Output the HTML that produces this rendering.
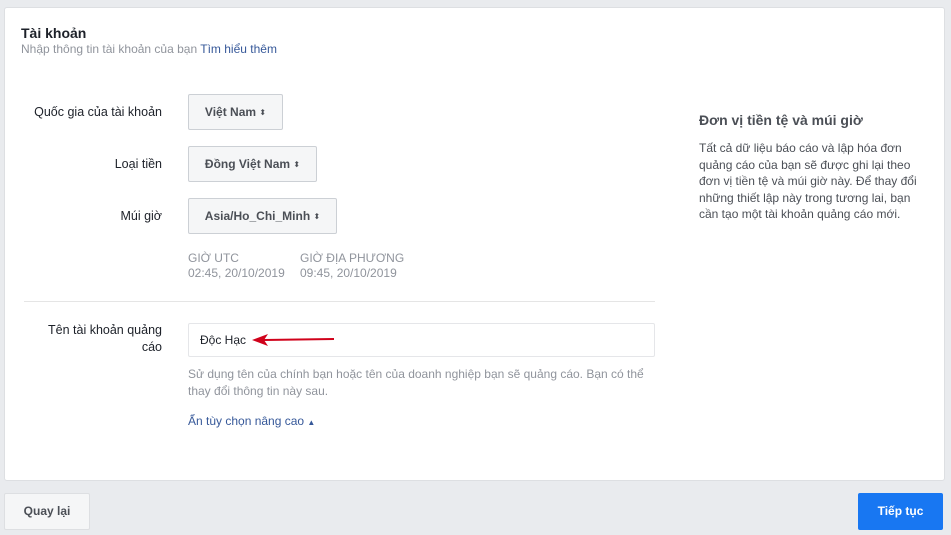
<!DOCTYPE html>
<html><head><meta charset="utf-8"><style>
*{margin:0;padding:0;box-sizing:border-box}
body{width:951px;height:535px;background:#e9ebee;font-family:"Liberation Sans",sans-serif;position:relative;overflow:hidden;color:#1d2129}
.card{position:absolute;left:4px;top:7px;width:941px;height:474px;background:#fff;border:1px solid #dddfe2;border-radius:3px}
.a{position:absolute;white-space:nowrap}
.sel{position:absolute;height:36px;background:#f5f6f7;border:1px solid #ccd0d5;border-radius:2px;font-size:12px;font-weight:bold;color:#4b4f56;line-height:34px;text-align:center}
.sel i{font-style:normal;font-size:8px;font-weight:normal;vertical-align:1px}
.g{color:#90949c;font-size:12px}
.l{font-size:12.5px;text-align:right;left:0;width:162px}
</style></head><body>
<div class="card"></div>
<div class="a" style="left:21px;top:25px;font-size:14px;font-weight:bold">Tài khoản</div>
<div class="a" style="left:21px;top:42px;font-size:12px;color:#90949c">Nhập thông tin tài khoản của bạn <span style="color:#365899">Tìm hiểu thêm</span></div>

<div class="a l" style="top:105px">Quốc gia của tài khoản</div>
<div class="sel" style="left:188px;top:94px;width:95px">Việt Nam <i>⬍</i></div>
<div class="a l" style="top:157px">Loại tiền</div>
<div class="sel" style="left:188px;top:146px;width:129px">Đồng Việt Nam <i>⬍</i></div>
<div class="a l" style="top:209px">Múi giờ</div>
<div class="sel" style="left:188px;top:198px;width:149px">Asia/Ho_Chi_Minh <i>⬍</i></div>
<div class="a g" style="left:188px;top:251px;line-height:15px">GIỜ UTC<br>02:45, 20/10/2019</div>
<div class="a g" style="left:300px;top:251px;line-height:15px">GIỜ ĐỊA PHƯƠNG<br>09:45, 20/10/2019</div>

<div style="position:absolute;left:24px;top:301px;width:631px;height:1px;background:#e5e5e5"></div>

<div class="a l" style="top:322px;line-height:17px">Tên tài khoản quảng<br>cáo</div>
<div style="position:absolute;left:188px;top:323px;width:467px;height:34px;border:1px solid #e5e6e9;border-radius:2px"></div>
<div class="a" style="left:200px;top:333px;font-size:12px">Độc Hạc</div>
<svg style="position:absolute;left:250px;top:332px" width="86" height="16"><line x1="14" y1="8" x2="84" y2="7" stroke="#d0021b" stroke-width="2"/><path d="M2 8 L18 2 L14 8 L18 14 Z" fill="#d0021b"/></svg>
<div class="a g" style="left:188px;top:366px;line-height:17px">Sử dụng tên của chính bạn hoặc tên của doanh nghiệp bạn sẽ quảng cáo. Bạn có thể<br>thay đổi thông tin này sau.</div>
<div class="a" style="left:188px;top:414px;font-size:12px;color:#365899">Ẩn tùy chọn nâng cao <span style="font-size:8px">▲</span></div>

<div class="a" style="left:699px;top:112px;font-size:14px;font-weight:bold;color:#4b4f56">Đơn vị tiền tệ và múi giờ</div>
<div class="a" style="left:699px;top:140px;font-size:12px;color:#4b4f56;line-height:16.5px">Tất cả dữ liệu báo cáo và lập hóa đơn<br>quảng cáo của bạn sẽ được ghi lại theo<br>đơn vị tiền tệ và múi giờ này. Để thay đổi<br>những thiết lập này trong tương lai, bạn<br>cần tạo một tài khoản quảng cáo mới.</div>

<div style="position:absolute;left:4px;top:493px;width:86px;height:37px;background:#f5f6f7;border:1px solid #dddfe2;border-radius:2px;font-size:12px;font-weight:bold;color:#4b4f56;text-align:center;line-height:35px">Quay lại</div>
<div style="position:absolute;left:858px;top:493px;width:85px;height:37px;background:#1877f2;border-radius:2px;font-size:12px;font-weight:bold;color:#fff;text-align:center;line-height:37px">Tiếp tục</div>
</body></html>
